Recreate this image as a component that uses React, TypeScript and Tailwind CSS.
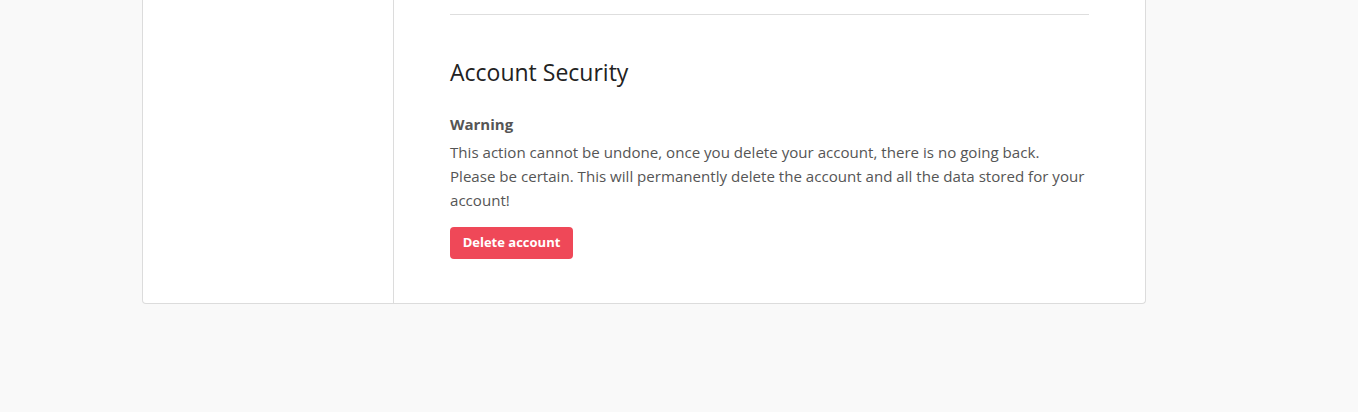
export default function App() {
  return (
    <div
      className="min-h-[412px] bg-[#f9f9f9]"
      style={{ fontFamily: '"Open Sans", "Noto Sans", sans-serif' }}
    >
      <div className="ml-[142px] flex w-[1004px] rounded-b border border-t-0 border-[#dcdcdc] bg-white">
        <aside className="w-[251px] shrink-0 border-r border-[#dcdcdc]" />
        <section className="flex-1 px-[56px] pt-[14px] pb-[44px]">
          <hr className="border-t border-[#dedede]" />
          <h2 className="mt-[43px] text-[23px] leading-[29px] text-[#222]">Account Security</h2>
          <h3 className="mt-[25px] mb-[4px] text-[15px] font-bold leading-6 text-[#555]">Warning</h3>
          <p className="text-[15.1px] leading-6 text-[#555]">
            This action cannot be undone, once you delete your account, there is no going back.
            <br />
            Please be certain. This will permanently delete the account and all the data stored for
            your account!
          </p>
          <button className="mt-[15px] h-8 w-[123px] rounded bg-[#ef4858] text-[13px] font-bold text-white">
            Delete account
          </button>
        </section>
      </div>
    </div>
  )
}
